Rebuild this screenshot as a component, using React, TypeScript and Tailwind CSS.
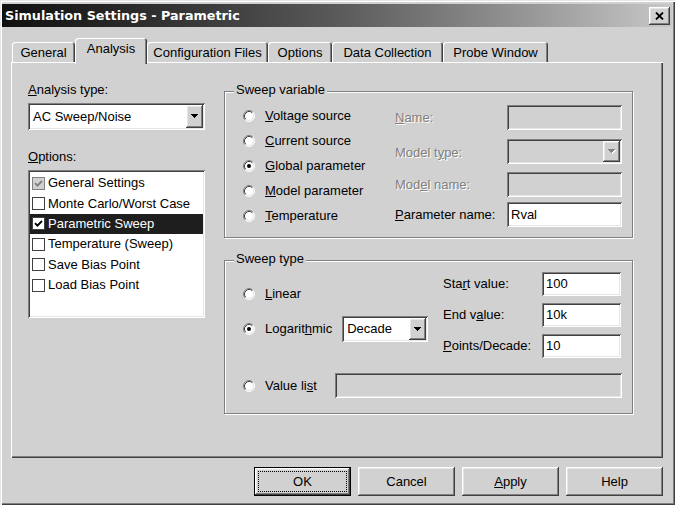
import type { ReactNode } from 'react'

const RAISED =
  'bg-[#d1d1d1] shadow-[inset_-1px_-1px_0_#404040,inset_1px_1px_0_#fff,inset_-2px_-2px_0_#808080,inset_2px_2px_0_#e6e6e6]'
const SUNKEN =
  'shadow-[inset_1px_1px_0_#808080,inset_-1px_-1px_0_#fff,inset_2px_2px_0_#404040,inset_-2px_-2px_0_#e6e6e6]'
const DIM = 'text-[#808080] [text-shadow:1px_1px_0_#fff]'

function Arrow({ disabled }: { disabled?: boolean }) {
  return (
    <svg width="8" height="5" viewBox="0 0 8 5">
      {disabled && <path d="M1 1h7v1H1zM2 2h5v1H2zM3 3h3v1H3zM4 4h1v1H4z" fill="#fff" />}
      <path d="M0 0h7v1H0zM1 1h5v1H1zM2 2h3v1H2zM3 3h1v1H3z" fill={disabled ? '#808080' : '#000'} />
    </svg>
  )
}

function DropButton({ disabled }: { disabled?: boolean }) {
  return (
    <div className={`${RAISED} flex h-full w-[17px] items-center justify-center`}>
      <Arrow disabled={disabled} />
    </div>
  )
}

function Radio({ checked }: { checked?: boolean }) {
  return (
    <svg width="12" height="12" viewBox="0 0 12 12" className="shrink-0">
      <circle cx="6" cy="6" r="5" fill="#fff" />
      <path d="M2.11 9.89A5.5 5.5 0 0 1 9.89 2.11" fill="none" stroke="#808080" />
      <path d="M9.89 2.11A5.5 5.5 0 0 1 2.11 9.89" fill="none" stroke="#fff" />
      <path d="M2.82 9.18A4.5 4.5 0 0 1 9.18 2.82" fill="none" stroke="#404040" />
      <path d="M9.18 2.82A4.5 4.5 0 0 1 2.82 9.18" fill="none" stroke="#e6e6e6" />
      {checked && <circle cx="6" cy="6" r="2" fill="#000" />}
    </svg>
  )
}

function Check({ color }: { color: string }) {
  return (
    <svg width="9" height="9" viewBox="0 0 9 9">
      <polyline points="1,4.2 3.4,6.6 8,2" fill="none" stroke={color} strokeWidth="1.9" />
    </svg>
  )
}

function Group({ title, className, children }: { title: string; className: string; children: ReactNode }) {
  return (
    <div className={`relative border border-[#808080] shadow-[inset_1px_1px_0_#fff,1px_1px_0_#fff] ${className}`}>
      <span className="absolute left-[9px] top-[-10px] bg-[#d1d1d1] px-[2px] leading-[16px]">{title}</span>
      {children}
    </div>
  )
}

const options = [
  { label: 'General Settings', state: 'grey' },
  { label: 'Monte Carlo/Worst Case', state: 'off' },
  { label: 'Parametric Sweep', state: 'on' },
  { label: 'Temperature (Sweep)', state: 'off' },
  { label: 'Save Bias Point', state: 'off' },
  { label: 'Load Bias Point', state: 'off' },
]

const tabs = [
  { label: 'General', w: 'w-[63px]' },
  { label: 'Analysis', w: 'w-[72px]', active: true },
  { label: 'Configuration Files', w: 'w-[121px]' },
  { label: 'Options', w: 'w-[64px]' },
  { label: 'Data Collection', w: 'w-[111px]' },
  { label: 'Probe Window', w: 'w-[105px]' },
]

export default function App() {
  return (
    <div className="flex h-[505px] w-[675px] flex-col overflow-hidden bg-[#d1d1d1] pl-[2px] pr-[3px] pt-[4px] font-['Liberation_Sans',Arial,sans-serif] text-[13px] leading-[16px] text-black shadow-[inset_1px_1px_0_#e6e6e6,inset_2px_2px_0_#fff,inset_-1px_-1px_0_#404040,inset_-2px_-2px_0_#808080]">
      {/* title bar */}
      <div className="flex h-[23px] shrink-0 items-center justify-between bg-gradient-to-r from-[#101010] via-[#5a5a5a] to-[#c8c8c8] pl-[3px] pr-[2px]">
        <span className="font-['DejaVu_Sans',sans-serif] text-[12.75px] font-bold text-white">
          Simulation Settings - Parametric
        </span>
        <div className={`${RAISED} flex h-[18px] w-[21px] items-center justify-center`}>
          <svg width="9" height="8" viewBox="0 0 9 8">
            <path d="M1 0.5l7 7M8 0.5l-7 7" stroke="#000" strokeWidth="1.8" />
          </svg>
        </div>
      </div>

      {/* tabs */}
      <div className="relative z-10 ml-[10px] mt-[11px] flex h-[24px] shrink-0 items-end">
        {tabs.map((t) =>
          t.active ? (
            <div
              key={t.label}
              className={`${t.w} -mb-[2px] flex h-[26px] items-center justify-center rounded-t-[3px] bg-[#d1d1d1] pb-[4px] shadow-[inset_1px_1px_0_#fff,inset_-1px_0_0_#404040,inset_-2px_0_0_#808080]`}
            >
              {t.label}
            </div>
          ) : (
            <div
              key={t.label}
              className={`${t.w} flex h-[20px] items-center justify-center rounded-t-[3px] pt-[1px] shadow-[inset_1px_1px_0_#fff,inset_-1px_0_0_#404040,inset_-2px_0_0_#808080]`}
            >
              {t.label}
            </div>
          )
        )}
      </div>

      {/* panel */}
      <div className="ml-[9px] flex h-[396px] w-[652px] shrink-0 gap-[19px] pl-[17px] pt-[20px] shadow-[inset_1px_1px_0_#fff,inset_-1px_-1px_0_#404040,inset_-2px_-2px_0_#808080]">
        {/* left column */}
        <div className="flex w-[177px] flex-col">
          <div className="h-[16px]">
            <u>A</u>nalysis type:
          </div>
          <div className={`${SUNKEN} mt-[5px] flex h-[27px] bg-white p-[2px]`}>
            <span className="flex flex-1 items-center pl-[3px]">AC Sweep/Noise</span>
            <DropButton />
          </div>
          <div className="mt-[19px] h-[16px]">
            <u>O</u>ptions:
          </div>
          <div className={`${SUNKEN} mt-[5px] flex h-[148px] flex-col bg-white px-[2px] pt-[3px]`}>
            {options.map((o) => (
              <div
                key={o.label}
                className={`flex h-[20.4px] items-center gap-[3px] pl-[2px] ${o.state === 'on' ? 'bg-[#1e1e1e] text-white' : ''}`}
              >
                <span
                  className={`flex h-[13px] w-[13px] items-center justify-center border ${
                    o.state === 'grey' ? 'border-[#808080] bg-[#d1d1d1]' : 'border-[#404040] bg-white'
                  }`}
                >
                  {o.state === 'grey' && <Check color="#808080" />}
                  {o.state === 'on' && <Check color="#000" />}
                </span>
                <span>{o.label}</span>
              </div>
            ))}
          </div>
        </div>

        {/* right column */}
        <div className="flex w-[409px] flex-col pt-[9px]">
          <Group title="Sweep variable" className="flex h-[147px] pl-[18px] pt-[11px]">
            <div className="flex w-[152px] flex-col">
              {[
                <>
                  <u>V</u>oltage source
                </>,
                <>
                  <u>C</u>urrent source
                </>,
                <>
                  <u>G</u>lobal parameter
                </>,
                <>
                  <u>M</u>odel parameter
                </>,
                <>
                  <u>T</u>emperature
                </>,
              ].map((label, i) => (
                <div key={i} className="flex h-[25px] items-center gap-[10px]">
                  <Radio checked={i === 2} />
                  <span>{label}</span>
                </div>
              ))}
            </div>
            <div className="mt-[2px] flex flex-col">
              <div className="flex h-[25px] items-center">
                <span className={`w-[112px] ${DIM}`}>
                  <u>N</u>ame:
                </span>
                <div className={`${SUNKEN} h-full w-[115px]`} />
              </div>
              <div className="mt-[9px] flex h-[25px] items-center">
                <span className={`w-[112px] pt-[3px] ${DIM}`}>
                  Model t<u>y</u>pe:
                </span>
                <div className={`${SUNKEN} flex h-full w-[115px] justify-end p-[2px]`}>
                  <DropButton disabled />
                </div>
              </div>
              <div className="mt-[8px] flex h-[25px] items-center">
                <span className={`w-[112px] ${DIM}`}>
                  Mod<u>e</u>l name:
                </span>
                <div className={`${SUNKEN} h-full w-[115px]`} />
              </div>
              <div className="mt-[5px] flex h-[25px] items-center">
                <span className="w-[112px]">
                  <u>P</u>arameter name:
                </span>
                <div className={`${SUNKEN} flex h-full w-[115px] items-center bg-white pl-[4px]`}>Rval</div>
              </div>
            </div>
          </Group>

          <Group title="Sweep type" className="mt-[22px] flex h-[154px] flex-col pl-[18px] pt-[11px]">
            <div className="flex">
              <div className="flex w-[200px] flex-col">
                <div className="mt-[12px] flex h-[20px] items-center gap-[10px]">
                  <Radio />
                  <span>
                    <u>L</u>inear
                  </span>
                </div>
                <div className="mt-[12px] flex h-[26px] items-center">
                  <Radio checked />
                  <span className="ml-[10px]">
                    Logarit<u>h</u>mic
                  </span>
                  <div className={`${SUNKEN} ml-[10px] flex h-full w-[86px] bg-white p-[2px]`}>
                    <span className="flex flex-1 items-center pl-[3px]">Decade</span>
                    <DropButton />
                  </div>
                </div>
              </div>
              <div className="flex flex-col">
                <div className="flex h-[24px] items-center">
                  <span className="w-[99px]">
                    Sta<u>r</u>t value:
                  </span>
                  <div className={`${SUNKEN} flex h-full w-[79px] items-center bg-white pl-[4px]`}>100</div>
                </div>
                <div className="mt-[7px] flex h-[24px] items-center">
                  <span className="w-[99px]">
                    End v<u>a</u>lue:
                  </span>
                  <div className={`${SUNKEN} flex h-full w-[79px] items-center bg-white pl-[4px]`}>10k</div>
                </div>
                <div className="mt-[7px] flex h-[24px] items-center">
                  <span className="w-[99px]">
                    <u>P</u>oints/Decade:
                  </span>
                  <div className={`${SUNKEN} flex h-full w-[79px] items-center bg-white pl-[4px]`}>10</div>
                </div>
              </div>
            </div>
            <div className="mt-[15px] flex h-[25px] items-center">
              <Radio />
              <span className="ml-[10px] w-[70px]">
                Value li<u>s</u>t
              </span>
              <div className={`${SUNKEN} h-full w-[287px]`} />
            </div>
          </Group>
        </div>
      </div>

      {/* buttons */}
      <div className="mt-[9px] flex h-[29px] shrink-0 justify-end gap-[7px] pr-[9px]">
        <div className="flex w-[97px] border border-black">
          <div className={`${RAISED} flex flex-1 p-[3px]`}>
            <div className="flex flex-1 items-center justify-center border border-dotted border-black">OK</div>
          </div>
        </div>
        <div className={`${RAISED} flex w-[97px] items-center justify-center`}>Cancel</div>
        <div className={`${RAISED} flex w-[97px] items-center justify-center`}>
          <span>
            <u>A</u>pply
          </span>
        </div>
        <div className={`${RAISED} flex w-[97px] items-center justify-center`}>Help</div>
      </div>
    </div>
  )
}
